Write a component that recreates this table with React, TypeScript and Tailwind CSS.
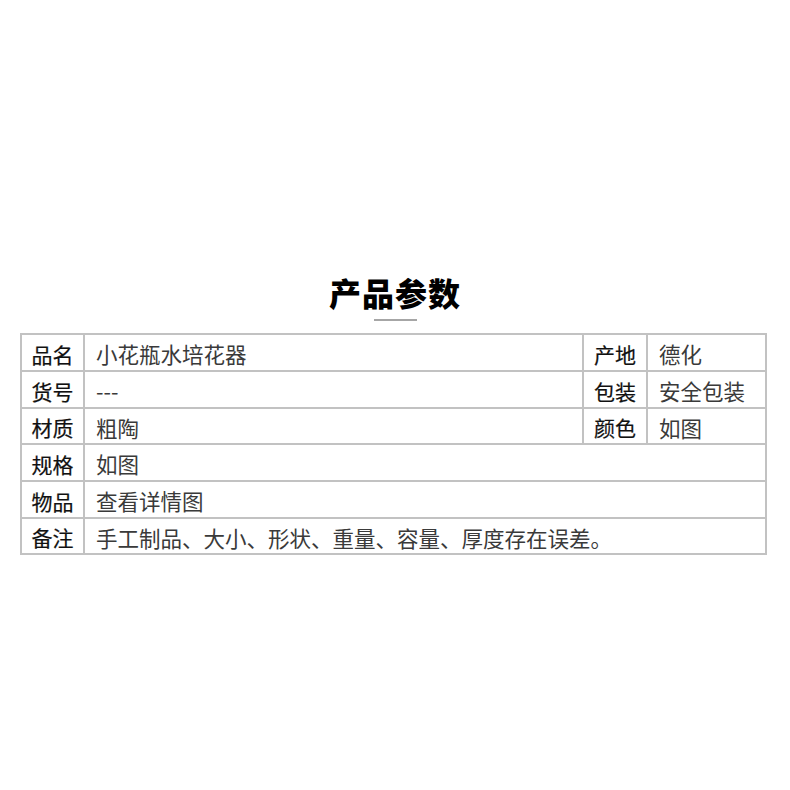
import React from 'react';

const font = { fontFamily: '"Noto Sans CJK SC", "Noto Sans", sans-serif' };

const Label: React.FC<{ children: React.ReactNode }> = ({ children }) => (
  <div className="bg-white flex items-center justify-center pt-[3px] text-[21px] text-[#111111] [-webkit-text-stroke:0.2px_#111111]">
    {children}
  </div>
);

const Value: React.FC<{ children: React.ReactNode; wide?: boolean }> = ({ children, wide }) => (
  <div
    className={`bg-white flex items-center pl-[11px] pt-[3px] text-[21.5px] text-[#3a3a3a] ${wide ? 'col-span-3' : ''}`}
  >
    {children}
  </div>
);

export default function App() {
  return (
    <div className="w-[790px] h-[790px] bg-white flex flex-col items-center" style={font}>
      <h1 className="mt-[272px] text-[32px] leading-[40px] font-black text-black tracking-[1px]">
        产品参数
      </h1>
      <div className="mt-[7px] w-[43px] h-[2px] bg-[#a6a6a6]" />
      <div className="mt-[12px] self-start ml-[20px] w-[747px] grid grid-cols-[61px_497px_62px_117px] grid-rows-[35px_35px_34px_35px_35px_34px] gap-[2px] p-[2px] bg-[#c2c2c2] leading-none">
        <Label>品名</Label>
        <Value>小花瓶水培花器</Value>
        <Label>产地</Label>
        <Value>德化</Value>

        <Label>货号</Label>
        <Value>---</Value>
        <Label>包装</Label>
        <Value>安全包装</Value>

        <Label>材质</Label>
        <Value>粗陶</Value>
        <Label>颜色</Label>
        <Value>如图</Value>

        <Label>规格</Label>
        <Value wide>如图</Value>

        <Label>物品</Label>
        <Value wide>查看详情图</Value>

        <Label>备注</Label>
        <Value wide>手工制品、大小、形状、重量、容量、厚度存在误差。</Value>
      </div>
    </div>
  );
}
